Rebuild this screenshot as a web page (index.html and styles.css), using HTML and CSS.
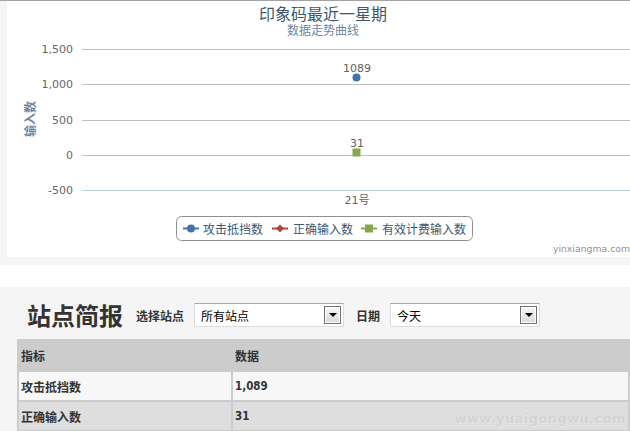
FILE: index.html
```html
<!DOCTYPE html>
<html lang="zh">
<head>
<meta charset="utf-8">
<title>站点简报</title>
<link rel="stylesheet" href="styles.css">
</head>
<body>
<div class="top-line"></div>
<div class="chart-wrap">
  <div class="chart">
    <svg class="chart-svg" width="623" height="256" viewBox="7 1 623 256" xmlns="http://www.w3.org/2000/svg">
      <text class="c-title" x="323" y="20" text-anchor="middle">印象码最近一星期</text>
      <text class="c-sub" x="323" y="35" text-anchor="middle">数据走势曲线</text>

      <line class="grid" x1="82" y1="49.5" x2="630" y2="49.5"/>
      <line class="grid" x1="82" y1="84.5" x2="630" y2="84.5"/>
      <line class="grid" x1="82" y1="120.5" x2="630" y2="120.5"/>
      <line class="grid" x1="82" y1="155.5" x2="630" y2="155.5"/>
      <line class="axis" x1="82" y1="190.5" x2="630" y2="190.5"/>

      <text class="ylab" x="73" y="53" text-anchor="end">1,500</text>
      <text class="ylab" x="73" y="88" text-anchor="end">1,000</text>
      <text class="ylab" x="73" y="124" text-anchor="end">500</text>
      <text class="ylab" x="73" y="159" text-anchor="end">0</text>
      <text class="ylab" x="73" y="194" text-anchor="end">-500</text>

      <text class="ytitle" x="0" y="0" text-anchor="middle" transform="translate(35 119) rotate(-90)">输入数</text>

      <text class="dlab" x="357" y="72" text-anchor="middle">1089</text>
      <circle cx="356.5" cy="77.5" r="4" fill="#4572A7"/>
      <text class="dlab" x="357" y="147" text-anchor="middle">31</text>
      <rect x="352.5" y="148.5" width="8" height="8" fill="#89A54E"/>

      <text class="xlab" x="357" y="204" text-anchor="middle">21号</text>

      <rect class="legend-box" x="176.5" y="216.5" width="296" height="24" rx="5" ry="5"/>
      <line x1="183" y1="228.5" x2="199" y2="228.5" stroke="#4572A7" stroke-width="2"/>
      <circle cx="191" cy="228.5" r="4" fill="#4572A7"/>
      <text class="leg" x="203" y="234">攻击抵挡数</text>
      <line x1="272" y1="228.5" x2="288" y2="228.5" stroke="#AA4643" stroke-width="2"/>
      <path d="M280 224.5 L284 228.5 L280 232.5 L276 228.5 Z" fill="#AA4643"/>
      <text class="leg" x="293" y="234">正确输入数</text>
      <line x1="361" y1="228.5" x2="377" y2="228.5" stroke="#89A54E" stroke-width="2"/>
      <rect x="365" y="224.5" width="8" height="8" fill="#89A54E"/>
      <text class="leg" x="382" y="234">有效计费输入数</text>

      <text class="credit" x="630" y="252" text-anchor="end">yinxiangma.com</text>
    </svg>
  </div>
</div>
<div class="gap"></div>
<div class="band"></div>
<section class="report">
  <div class="report-head">
    <h2 class="report-title">站点简报</h2>
    <span class="field-label">选择站点</span>
    <div class="fake-select">
      <span class="fake-select-text">所有站点</span>
      <span class="fake-select-btn"><span class="tri"></span></span>
    </div>
    <span class="field-label field-label-date">日期</span>
    <div class="fake-select">
      <span class="fake-select-text">今天</span>
      <span class="fake-select-btn"><span class="tri"></span></span>
    </div>
  </div>
  <table class="stats">
    <tr class="row-head">
      <td class="col-a">指标</td>
      <td>数据</td>
    </tr>
    <tr class="row-odd">
      <td class="col-a">攻击抵挡数</td>
      <td class="num">1,089</td>
    </tr>
    <tr class="row-even">
      <td class="col-a">正确输入数</td>
      <td class="num">31</td>
    </tr>
  </table>
</section>
<div class="watermark">www.yuaigongwu.com</div>
</body>
</html>
```
FILE: styles.css
```css
html, body {
  margin: 0;
  padding: 0;
}
body {
  width: 630px;
  height: 431px;
  overflow: hidden;
  background: #f5f5f5;
  font-family: "DejaVu Sans", "Noto Sans CJK SC", sans-serif;
  position: relative;
}
.top-line {
  height: 1px;
  background: #a4a4a4;
}
.chart-wrap {
  padding-left: 7px;
  background: #f5f5f5;
}
.chart {
  background: #fff;
  height: 256px;
}
.chart-svg {
  display: block;
  font-family: "DejaVu Sans", "Noto Sans CJK SC", sans-serif;
}
.c-title {
  font-size: 16px;
  fill: #3e576f;
}
.c-sub {
  font-size: 12px;
  fill: #6d869f;
}
.grid {
  stroke: #c0c0c0;
  stroke-width: 1;
}
.axis {
  stroke: #c0d0e0;
  stroke-width: 1;
}
.ylab, .xlab {
  font-size: 11px;
  fill: #666;
}
.dlab {
  font-size: 11px;
  fill: #606060;
}
.ytitle {
  font-size: 12px;
  font-weight: bold;
  fill: #6d869f;
}
.legend-box {
  fill: none;
  stroke: #909090;
  stroke-width: 1;
}
.leg {
  font-size: 12px;
  fill: #3e576f;
}
.credit {
  font-size: 9.3px;
  fill: #909090;
}
.gap {
  height: 8px;
  background: #f5f5f5;
}
.band {
  height: 22px;
  background: #fff;
}
.report {
  background: #f5f5f5;
  padding: 16px 0 0 17px;
}
.report-head {
  display: flex;
  align-items: center;
  height: 24px;
  margin-bottom: 12px;
}
.report-title {
  margin: 0 13px 0 10px;
  font-family: "Noto Sans CJK SC", sans-serif;
  font-size: 24px;
  line-height: 24px;
  font-weight: bold;
  color: #333;
}
.field-label {
  font-family: "Noto Sans CJK SC", sans-serif;
  font-size: 12px;
  font-weight: bold;
  color: #333;
  margin-right: 10px;
}
.field-label-date {
  margin-left: 12px;
}
.fake-select {
  box-sizing: border-box;
  width: 150px;
  height: 24px;
  background: #fff;
  border: 1px solid #dcdcdc;
  border-top-color: #a9a9a9;
  display: flex;
  align-items: center;
  justify-content: space-between;
  padding: 0 2px 0 6px;
}
.fake-select-text {
  font-family: "Noto Sans CJK SC", sans-serif;
  font-size: 12px;
  color: #000;
}
.fake-select-btn {
  box-sizing: border-box;
  width: 17px;
  height: 18px;
  border: 1px solid #707070;
  background: linear-gradient(#f6f6f6, #dadada);
  box-shadow: inset 0 0 0 1px #fff;
  display: flex;
  align-items: center;
  justify-content: center;
}
.tri {
  width: 0;
  height: 0;
  border-left: 4px solid transparent;
  border-right: 4px solid transparent;
  border-top: 4px solid #000;
}
.stats {
  width: 613px;
  border-collapse: separate;
  border-spacing: 2px;
  background: #ccc;
}
.stats td {
  height: 28px;
  padding: 0 0 0 2px;
  font-family: "Noto Sans CJK SC", sans-serif;
  font-size: 12px;
  font-weight: bold;
  color: #333;
  vertical-align: middle;
}
.stats .col-a {
  width: 210px;
}
.row-head td {
  height: 29px;
  background: #ccc;
}
.row-odd td {
  background: #f7f7f7;
}
.row-even td {
  background: #dedede;
}
.stats td.num {
  font-family: "DejaVu Sans Condensed", "DejaVu Sans", sans-serif;
  font-size: 11.5px;
}
.watermark {
  position: absolute;
  right: 4px;
  top: 411px;
  font-family: "DejaVu Sans", sans-serif;
  font-weight: bold;
  font-size: 13px;
  letter-spacing: 0.4px;
  color: #d4d4d4;
  text-shadow: 1px 1px 0 #e6e6e6;
}
```
